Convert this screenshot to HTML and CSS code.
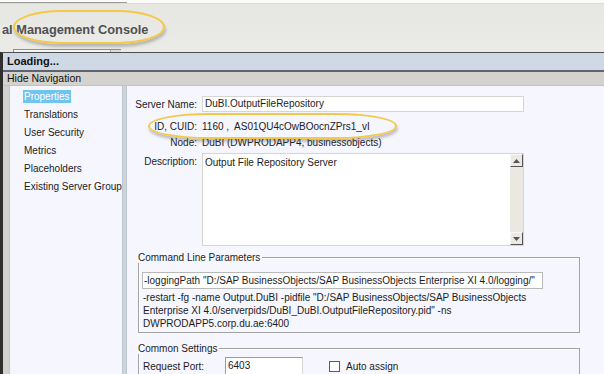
FILE: index.html
```html
<!DOCTYPE html>
<html>
<head>
<meta charset="utf-8">
<link rel="stylesheet" href="styles.css">
</head>
<body>
<div class="topstrip"><div class="ts-left"></div></div>
<header class="console-header">
  <h1 class="console-title">al Management Console</h1>
  <div class="combo-stub"><span class="combo-btn"></span></div>
</header>
<div class="window">
  <div class="titlebar">Loading...</div>
  <div class="navbar">Hide Navigation</div>
  <div class="win-body">
    <nav class="nav">
      <ul class="nav-list">
        <li class="nav-item active"><span>Properties</span></li>
        <li class="nav-item"><span>Translations</span></li>
        <li class="nav-item"><span>User Security</span></li>
        <li class="nav-item"><span>Metrics</span></li>
        <li class="nav-item"><span>Placeholders</span></li>
        <li class="nav-item"><span>Existing Server Group</span></li>
      </ul>
    </nav>
    <main class="main">
      <div class="row row-name">
        <div class="label">Server Name:</div>
        <div class="input input-name">DuBI.OutputFileRepository</div>
      </div>
      <div class="row row-id">
        <div class="label">ID, CUID:</div>
        <div class="value">1160 ,&nbsp; AS01QU4cOwBOocnZPrs1_vI</div>
      </div>
      <div class="row row-node">
        <div class="label">Node:</div>
        <div class="value">DuBI (DWPRODAPP4, businessobjects)</div>
      </div>
      <div class="row row-desc">
        <div class="label label-top">Description:</div>
        <div class="textarea">
          <div class="ta-text">Output File Repository Server</div>
          <div class="scrollbar">
            <span class="sb-btn"><svg width="7" height="4" viewBox="0 0 7 4"><path d="M0 4 L3.5 0 L7 4 Z" fill="#555"/></svg></span>
            <span class="sb-btn"><svg width="7" height="4" viewBox="0 0 7 4"><path d="M0 0 L3.5 4 L7 0 Z" fill="#555"/></svg></span>
          </div>
        </div>
      </div>
      <fieldset class="group group-cmd">
        <legend>Command Line Parameters</legend>
        <div class="input input-cmd">-loggingPath "D:/SAP BusinessObjects/SAP BusinessObjects Enterprise XI 4.0/logging/"</div>
        <p class="cmd-text">-restart -fg -name Output.DuBI -pidfile "D:/SAP BusinessObjects/SAP BusinessObjects Enterprise XI 4.0/serverpids/DuBI_DuBI.OutputFileRepository.pid" -ns DWPRODAPP5.corp.du.ae:6400</p>
      </fieldset>
      <fieldset class="group group-common">
        <legend>Common Settings</legend>
        <div class="port-row">
          <span class="port-label">Request Port:</span>
          <span class="input input-port">6403</span>
          <span class="checkbox"></span>
          <span class="check-label">Auto assign</span>
        </div>
      </fieldset>
    </main>
  </div>
</div>
<span class="highlight hl-title"></span>
<span class="highlight hl-id"></span>
</body>
</html>
```

FILE: styles.css
```css
html, body {
  margin: 0;
  padding: 0;
  width: 604px;
  height: 374px;
  overflow: hidden;
}
body {
  position: relative;
  background: #e8e8e5;
  font-family: "Liberation Sans", Arial, sans-serif;
  font-size: 10px;
  color: #1c1c1c;
}
.topstrip {
  height: 3px;
  background: #fbfbfa;
  border-bottom: 1px solid #dcdcd8;
  display: flex;
}
.ts-left {
  width: 127px;
  border-bottom: 1px solid #9a9a9a;
}
.console-header {
  height: 48px;
  background: linear-gradient(#e6e6e3, #ebebe8);
  display: flex;
  flex-direction: column;
}
.console-title {
  margin: 0;
  padding: 18px 0 0 2px;
  height: 33px;
  box-sizing: border-box;
  font-family: "Liberation Sans", Arial, sans-serif;
  font-size: 12.8px;
  font-weight: bold;
  color: #505050;
  letter-spacing: 0;
}
.combo-stub {
  margin: 12px 0 0 13px;
  width: 107px;
  height: 3px;
  border-top: 1px solid #8e8e8e;
  border-left: 1px solid #8e8e8e;
  background: #f4f4f2;
  display: flex;
  justify-content: flex-end;
}
.combo-btn {
  width: 10px;
  border-left: 1px solid #aaa;
  background: #dcdcd8;
}
.window {
  border-left: 3px solid #2f2f2f;
  border-top: 1px solid #4e4e4e;
}
.titlebar {
  height: 17px;
  line-height: 17px;
  background: #cfd9e5;
  border-bottom: 2px solid #5f6370;
  padding-left: 4px;
  font-size: 11px;
  font-weight: bold;
  color: #111;
}
.navbar {
  height: 13px;
  line-height: 13px;
  background: #d4d2cc;
  border-bottom: 1px solid #b4c5d8;
  padding-left: 4px;
  font-size: 10.5px;
  color: #111;
}
.win-body {
  display: flex;
  gap: 3px;
  background: #d4d2cc;
  padding-left: 6px;
  height: 300px;
}
.nav {
  width: 112px;
  background: #f5f6fe;
  border: 1px solid #b9c6d6;
  border-top: none;
  overflow: hidden;
  white-space: nowrap;
}
.nav-list {
  list-style: none;
  margin: 0;
  padding: 2px 0 0 13px;
}
.nav-item {
  height: 18px;
  line-height: 18px;
  font-size: 10px;
  color: #1c1c1c;
}
.nav-item span {
  padding: 1px 1px;
}
.nav-item.active span {
  background: #70c5ee;
  color: #fff;
}
.main {
  flex: 1;
  background: #f5f6fe;
  border-left: 1px solid #b9c6d6;
  padding-top: 10px;
}
.row {
  display: flex;
  align-items: center;
  gap: 5px;
}
.label {
  width: 70px;
  text-align: right;
  flex-shrink: 0;
}
.label-top {
  align-self: flex-start;
  padding-top: 3px;
}
.input {
  background: #fff;
  border: 1px solid #d7d5d0;
  box-sizing: border-box;
  white-space: nowrap;
  overflow: hidden;
}
.input-name {
  width: 322px;
  height: 16px;
  line-height: 14px;
  padding-left: 2px;
}
.row-id {
  margin-top: 7px;
  height: 15px;
}
.row-node {
  margin-top: 1px;
  height: 15px;
}
.row-desc {
  margin-top: 3px;
  align-items: flex-start;
}
.textarea {
  width: 322px;
  height: 93px;
  box-sizing: border-box;
  background: #fff;
  border: 1px solid #d7d5d0;
  display: flex;
}
.ta-text {
  flex: 1;
  padding: 3px 0 0 2px;
}
.scrollbar {
  width: 13px;
  background: #ebe8e2;
  display: flex;
  flex-direction: column;
  justify-content: space-between;
}
.sb-btn {
  height: 13px;
  box-sizing: border-box;
  background: #ece9e4;
  border: 1px solid;
  border-color: #f8f8f8 #555 #555 #f8f8f8;
  display: flex;
  align-items: center;
  justify-content: center;
}
.group {
  margin: 6px 0 0 11px;
  padding: 0;
  width: 442px;
  box-sizing: border-box;
  border: 1px solid #a3a3a3;
  box-shadow: inset 1px 1px 0 #fff;
}
.group legend {
  padding: 0 2px 0 0;
  margin-left: -1px;
  color: #1c1c1c;
}
.group-cmd {
  height: 81px;
}
.input-cmd {
  margin: 9px 0 0 3px;
  width: 401px;
  height: 17px;
  line-height: 15px;
  padding-left: 1px;
  border-color: #b9b9b9;
}
.cmd-text {
  margin: 2px 0 0 4px;
  width: 400px;
  line-height: 13px;
}
.group-common {
  margin-top: 10px;
  height: 40px;
}
.port-row {
  display: flex;
  align-items: center;
  margin: 3px 0 0 4px;
}
.port-label {
  width: 82px;
}
.input-port {
  width: 78px;
  height: 18px;
  line-height: 16px;
  padding-left: 2px;
  border-color: #9c9c9c #d7d5d0 #d7d5d0 #9c9c9c;
}
.checkbox {
  width: 11px;
  height: 11px;
  box-sizing: border-box;
  background: #fff;
  border: 1px solid #5a5a5a;
  margin-left: 26px;
}
.check-label {
  margin-left: 6px;
}
.highlight {
  position: absolute;
  border: 2px solid #f4c94a;
  box-shadow: 1px 3px 3px rgba(90, 90, 90, 0.35);
  pointer-events: none;
}
.hl-title {
  left: 13px;
  top: 10px;
  width: 148px;
  height: 30px;
  border-radius: 48px / 17px;
}
.hl-id {
  left: 148px;
  top: 113px;
  width: 245px;
  height: 22px;
  border-radius: 60px / 13px;
}
```
